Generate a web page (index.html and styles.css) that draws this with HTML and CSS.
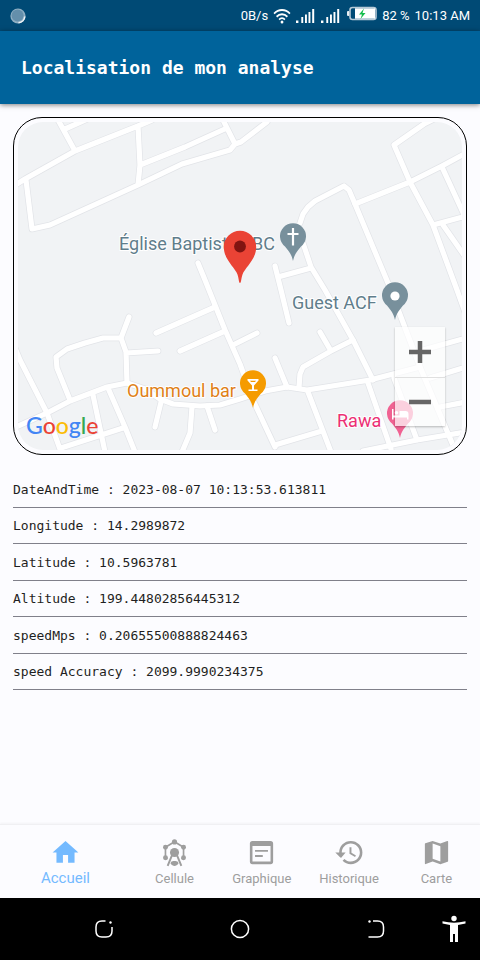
FILE: index.html
```html
<!DOCTYPE html>
<html lang="fr">
<head>
<meta charset="utf-8">
<meta name="viewport" content="width=device-width, initial-scale=1">
<title>Localisation de mon analyse</title>
<link rel="stylesheet" href="styles.css">
</head>
<body>
<div class="status">
  <svg class="status-dot" width="18" height="18" viewBox="0 0 18 18" aria-hidden="true">
    <circle cx="9" cy="9" r="7.6" fill="#8fafc3"/>
    <circle cx="8.6" cy="8.4" r="6" fill="#648fab"/>
    <path d="M15.800 9.500A7 7 0 0 1 9.500 15.800" fill="none" stroke="#eef3f6" stroke-width="1.600"/>
  </svg>
  <div class="status-info">
    <span>0B/s</span>
    <svg width="18" height="16" viewBox="0 0 20 16" preserveAspectRatio="none" aria-hidden="true" fill="none" stroke="#fff" stroke-width="1.9">
      <path d="M1.2 5.6a12.6 12.6 0 0 1 17.6 0M4 8.7a8.6 8.6 0 0 1 12 0M6.8 11.6a4.6 4.6 0 0 1 6.4 0"/>
      <circle cx="10" cy="14" r="1.6" fill="#fff" stroke="none"/>
    </svg>
    <svg width="19" height="16" viewBox="0 0 19 16" aria-hidden="true" fill="#fff">
      <path d="M0 12.600h2.400V15H0zM5.300 9h1.900v6H5.300zM9 6.500h1.900V15H9zM12.500 4h1.900v11h-1.900zM16.200 1h2v14h-2z"/>
    </svg>
    <svg class="sim" width="19" height="16" viewBox="0 0 19 16" aria-hidden="true" fill="#fff">
      <path d="M0 12.600h2.400V15H0zM5.300 9h1.900v6H5.300zM9 6.500h1.900V15H9zM12.500 4h1.900v11h-1.900zM16.200 1h2v14h-2z"/>
    </svg>
    <svg class="battery" width="30" height="16" viewBox="0 0 30 16" aria-hidden="true">
      <rect x="0" y="5" width="2.500" height="5" rx="1" fill="#e8eef2"/>
      <rect x="3" y="1.500" width="26" height="12" rx="2.500" fill="#004a75" stroke="#b7cad7" stroke-width="1.600"/>
      <rect x="8" y="2.300" width="20" height="10.400" fill="#fff"/>
      <path d="M17 2.500l-5 6h3l-1.500 4.500 5-6h-3z" fill="#14bd4c"/>
    </svg>
    <span>82 %</span>
    <span>10:13 AM</span>
  </div>
</div>

<header class="appbar"><h1>Localisation de mon analyse</h1></header>

<main>
  <section class="map" aria-label="Carte">
    <svg class="map-canvas" viewBox="18 122 444 328" role="img" aria-label="Carte de la position">
      <defs>
        <g id="roads" fill="none" stroke-linecap="round" stroke-linejoin="round">
          <path d="M14 186L25 179L75 151L138 126L152 120M57 118L75 151M65 129L92 117M26 180L32 229L50 225L138 185L182 164L230 150L235 144L241 142L267 122M138 126L140 165L138 185M140 165L185 147L227 128M223 120L235 144"/>
          <path d="M198 263L205 280L225 330L240 364L253 400L275 447"/>
          <path d="M434 119L424 124L394 145L410 182L433 225L457 290L466 315M466 153L442 166L410 182L355 204M442 167L466 219M433 225L466 216M443 225L466 258"/>
          <path d="M300 223L303 214L308 207L315 201L344 186L349 190L355 204L388 283L420 367L455 450M303 243L311 267L325 290L353 340L373 380M275 266L281 290L289 323M278 277L311 268"/>
          <path d="M14 428L47 413L70 401L107 387L127 383L145 389L160 399L173 404L200 406L220 405L240 399L265 391L287 387L307 390L370 380L420 367M430 378L466 367M423 350L466 338M440 407L466 402"/>
          <path d="M70 400L57 368L56 357L67 349L85 343L103 338L121 338L129 317M121 338L126 352L127 383M126 353L158 351M156 333L215 307M180 351L225 331M233 345L257 333"/>
          <path d="M15 348L20 360L47 413L61 452M93 395L105 452M108 388L125 427L135 452M61 448L123 428M162 398L155 427M192 407L190 433L182 452M207 406L215 430"/>
          <path d="M275 358L287 387M320 332L331 351M353 340L331 351L303 367L300 374L299 387M308 392L331 452M275 445L322 431M368 383L391 449M394 378L417 440M363 451L417 440L466 432"/>
        </g>
      </defs>
      <rect x="18" y="122" width="444" height="328" fill="#f1f3f5"/>
      <use href="#roads" stroke="#e2e4e8" stroke-width="6.600"/>
      <use href="#roads" stroke="#ffffff" stroke-width="5.200"/>

      <g class="place">
        <text x="119" y="250" fill="#607d8b">Église Baptiste EBC</text>
        <text x="292" y="309" fill="#607d8b">Guest ACF</text>
        <text x="127" y="397" fill="#e07f17">Oummoul bar</text>
        <text x="337" y="427" fill="#ec2f74">Rawa</text>
      </g>
      <path d="M293 261c-1.500-7-4-9.500-8-14.500a13 13 0 1 1 16 0c-4 5-6.500 7.500-8 14.500z" fill="#78909c"/>
      <path d="M293 228v17.500M287.500 234h11" stroke="#fff" stroke-width="2.200" fill="none"/>
      <path d="M395 320c-1.500-7-4-9.500-8-14.500a13 13 0 1 1 16 0c-4 5-6.500 7.500-8 14.500z" fill="#78909c"/>
      <circle cx="395" cy="296" r="4.600" fill="#fff"/>
      <path d="M253 408c-1.500-7-4-9.500-8-14.500a13 13 0 1 1 16 0c-4 5-6.500 7.500-8 14.500z" fill="#f59b00"/>
      <path d="M247.500 379h11v1.500l-4.500 5v4h3.500v1.500h-9v-1.500h3.500v-4l-4.500-5z" fill="#fff"/>
      <path d="M250 380.800h6l-1 1.200h-4z" fill="#f59b00"/>
      <path d="M400 438c-1.500-7-4-9.500-8-14.500a13 13 0 1 1 16 0c-4 5-6.500 7.500-8 14.500z" fill="#f06292"/>
      <path d="M392 409h1.500v6.500h6V411h6c2 0 3 1 3 3v5.500H407V417.500H393.500v2H392z" fill="#fff"/>
      <circle cx="396.500" cy="412.800" r="1.800" fill="#fff"/>
      <path d="M240 283c-1.200 0-1-4-2.500-8.500-2.500-7-13.700-15-13.700-27.500a16.200 16.200 0 0 1 32.400 0c0 12.500-11.200 20.500-13.700 27.500-1.500 4.500-1.300 8.500-2.500 8.500z" fill="#ea4335"/>
      <circle cx="240" cy="246.500" r="5.900" fill="#811411"/>
      <text class="brand" x="26" y="434"><tspan fill="#4285f4">G</tspan><tspan fill="#ea4335">o</tspan><tspan fill="#fbbc05">o</tspan><tspan fill="#4285f4">g</tspan><tspan fill="#34a853">l</tspan><tspan fill="#ea4335">e</tspan></text>
    </svg>
    <div class="zoom">
      <button type="button" aria-label="Zoom avant"><svg width="22" height="22" viewBox="0 0 22 22" aria-hidden="true"><path d="M11 0v22M0 11h22" stroke="#666" stroke-width="4.500"/></svg></button>
      <button type="button" aria-label="Zoom arrière"><svg width="22" height="22" viewBox="0 0 22 22" aria-hidden="true"><path d="M0 11h22" stroke="#666" stroke-width="4.500"/></svg></button>
    </div>
  </section>

  <ul class="facts">
    <li>DateAndTime : 2023-08-07 10:13:53.613811</li>
    <li>Longitude : 14.2989872</li>
    <li>Latitude : 10.5963781</li>
    <li>Altitude : 199.44802856445312</li>
    <li>speedMps : 0.20655500888824463</li>
    <li>speed Accuracy : 2099.9990234375</li>
  </ul>
</main>

<nav class="tabs">
  <a class="tab active" href="#accueil" aria-current="page">
    <svg viewBox="0 0 24 24" aria-hidden="true"><path d="M10 20v-6h4v6h5v-8h3L12 3 2 12h3v8z"/></svg>
    <span>Accueil</span>
  </a>
  <a class="tab" href="#cellule">
    <svg viewBox="0 0 24 24" aria-hidden="true">
      <path d="M6.500 17.200L5 16V8l7-4.300L19 8v8l-1.500 1.200" fill="none" stroke="currentColor" stroke-width="1.300"/>
      <circle cx="12" cy="3.800" r="2"/><circle cx="5" cy="7.900" r="1.900"/><circle cx="19" cy="7.900" r="1.900"/><circle cx="5" cy="16.100" r="1.900"/><circle cx="19" cy="16.100" r="1.900"/><circle cx="12" cy="12" r="3.500"/>
      <path d="M10.500 13L6.700 22.300M13.500 13l3.800 9.300" stroke="currentColor" stroke-width="1.500"/>
      <path d="M9.300 19.300c1.200-1 4.200-1 5.400 0l.4 1.200c-.8 1.200-2 1.900-3.100 1.900s-2.300-.7-3.100-1.900z"/>
    </svg>
    <span>Cellule</span>
  </a>
  <a class="tab" href="#graphique">
    <svg viewBox="0 0 24 24" aria-hidden="true"><path fill-rule="evenodd" d="M19 3H5a2 2 0 0 0-2 2v14a2 2 0 0 0 2 2h14a2 2 0 0 0 2-2V5a2 2 0 0 0-2-2zm0 16H5V7h14zm-2-7.500H7V10h10zm-4 4H7V14h6z"/></svg>
    <span>Graphique</span>
  </a>
  <a class="tab" href="#historique">
    <svg viewBox="0 0 24 24" aria-hidden="true"><path d="M13 3a9 9 0 0 0-9 9H1l3.890 3.890.7.140L9 12H6c0-3.870 3.130-7 7-7s7 3.130 7 7-3.130 7-7 7c-1.930 0-3.680-.79-4.940-2.060l-1.420 1.420A8.954 8.954 0 0 0 13 21a9 9 0 0 0 0-18zm-1 5v5l4.280 2.540.72-1.210-3.500-2.080V8z"/></svg>
    <span>Historique</span>
  </a>
  <a class="tab" href="#carte">
    <svg viewBox="0 0 24 24" aria-hidden="true"><path d="M20.500 3l-.16.030L15 5.100 9 3 3.360 4.900c-.21.070-.36.250-.36.480V20.500c0 .28.220.5.500.5l.16-.03L9 18.900l6 2.100 5.640-1.900c.21-.07.360-.25.360-.48V3.500c0-.28-.22-.5-.5-.5zM15 19l-6-2.110V5l6 2.110z"/></svg>
    <span>Carte</span>
  </a>
</nav>

<div class="system">
  <button type="button" aria-label="Applications récentes"><svg width="20" height="20" viewBox="0 0 20 20" aria-hidden="true" fill="none" stroke="#fff" stroke-width="1.500"><path d="M11.500 2H8Q2 2 2 8v4q0 6 6 6h4q6 0 6-6V8"/><circle cx="16.500" cy="3.500" r="1.200" fill="#fff" stroke="none"/></svg></button>
  <button type="button" aria-label="Écran d'accueil"><svg width="20" height="20" viewBox="0 0 20 20" aria-hidden="true"><circle cx="10" cy="10" r="8.600" fill="none" stroke="#fff" stroke-width="1.500"/></svg></button>
  <button type="button" aria-label="Retour"><svg width="20" height="20" viewBox="0 0 20 20" aria-hidden="true" fill="none" stroke="#fff" stroke-width="1.500"><path d="M7 2h4.500Q17.500 2 17.500 8v4q0 6-6 6H2.500"/><circle cx="3.500" cy="2.500" r="1.200" fill="#fff" stroke="none"/></svg></button>
  <button class="assist" type="button" aria-label="Accessibilité"><svg width="24" height="28" viewBox="0 0 24 28" aria-hidden="true" fill="#fff"><circle cx="12" cy="3.500" r="2.700"/><path d="M.5 6.300Q12 9.200 23.500 6.300v2.300L16 9.900V27h-3v-8h-2v8H8V9.900L.5 8.600z"/></svg></button>
</div>
</body>
</html>
```
FILE: styles.css
```css
* {
  box-sizing: border-box;
}

body {
  margin: 0;
  min-height: 100vh;
  display: flex;
  flex-direction: column;
  background: #fcfcff;
  color: #1f1f22;
  font-family: Roboto, "Liberation Sans", sans-serif;
}

svg {
  display: block;
}

button {
  border: 0;
  padding: 0;
  background: none;
  display: grid;
  place-items: center;
}

.status {
  height: 31px;
  padding: 0 10px 0 9px;
  display: flex;
  align-items: center;
  justify-content: space-between;
  background: #004a75;
  color: #fff;
  font-size: 13px;
}

.status-info {
  display: flex;
  align-items: center;
  gap: 5px;
}

.sim {
  margin-left: 1px;
}

.battery {
  margin-left: 2px;
  margin-bottom: 3px;
}

.appbar {
  min-height: 73px;
  padding: 0 21px;
  display: flex;
  align-items: center;
  background: #00639b;
  color: #fff;
  box-shadow: 0 1px 5px rgba(0, 0, 0, 0.5);
}

h1 {
  margin: 0;
  font: bold 18px/24px "DejaVu Sans Mono", monospace;
}

main {
  flex: 1;
  padding: 13px;
}

.map {
  position: relative;
  padding: 4px;
  border: 1px solid #000;
  border-radius: 29px;
}

.map-canvas {
  width: 100%;
  height: auto;
  border-radius: 25px;
}

.place {
  font-size: 18px;
  paint-order: stroke;
  stroke: #fff;
  stroke-width: 2px;
}

.brand {
  font: 500 23px Lato, sans-serif;
  stroke-width: 0;
}

.zoom {
  position: absolute;
  right: 21px;
  bottom: 28px;
  width: 50px;
  background: rgba(255, 255, 255, 0.7);
  box-shadow: 0 1px 2px rgba(0, 0, 0, 0.25);
}

.zoom button {
  width: 100%;
  height: 50px;
}

.zoom button + button {
  height: 49px;
  border-top: 1px solid #e0e0e0;
}

.facts {
  margin: 16px 0 0;
  padding: 0;
  min-height: 219px;
  display: grid;
  grid-auto-rows: 1fr;
  list-style: none;
  font: 13px/18px "DejaVu Sans Mono", monospace;
}

.facts li {
  padding-top: 2px;
  display: flex;
  align-items: center;
  border-bottom: 1px solid #80808a;
}

.tabs {
  min-height: 74px;
  display: flex;
  border-top: 1px solid #f0f0f3;
  box-shadow: 0 -1px 2px rgba(0, 0, 0, 0.04);
}

.tab {
  flex: 2 1 0;
  padding-top: 12px;
  display: flex;
  flex-direction: column;
  align-items: center;
  gap: 1px;
  color: #9e9e9e;
  font-size: 13px;
  line-height: 20px;
  text-decoration: none;
}

.tab.active {
  flex-grow: 3;
  gap: 0;
  color: #74baff;
  font-size: 15px;
}

.tab svg {
  width: 31px;
  height: 31px;
  fill: currentColor;
}

.system {
  position: relative;
  height: 62px;
  padding: 0 36px;
  display: grid;
  grid-template-columns: repeat(3, 1fr);
  background: #000;
}

.assist {
  position: absolute;
  right: 14px;
  top: 17px;
}
```
